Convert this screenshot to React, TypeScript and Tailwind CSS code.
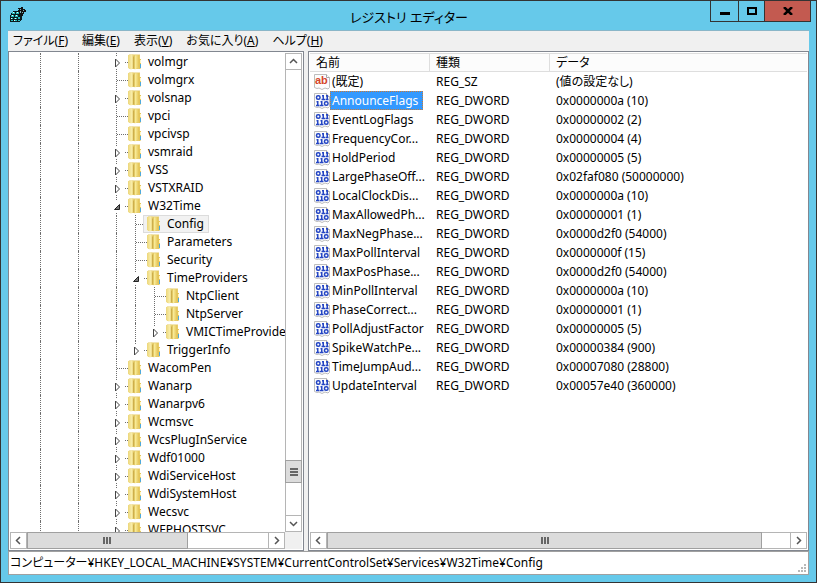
import React from 'react';
import clsx from 'clsx';

type NodeState = 'open' | 'closed' | 'leaf';

interface TreeNode {
  name: string;
  state: NodeState;
  depth: number;
  // vertical guides of the parents that still have siblings below
  guides: boolean[];
  last?: boolean;
  selected?: boolean;
}

const top = (name: string, state: NodeState): TreeNode => ({ name, state, depth: 0, guides: [] });

const tree: TreeNode[] = [
  top('volmgr', 'closed'),
  top('volmgrx', 'leaf'),
  top('volsnap', 'closed'),
  top('vpci', 'leaf'),
  top('vpcivsp', 'leaf'),
  top('vsmraid', 'closed'),
  top('VSS', 'closed'),
  top('VSTXRAID', 'closed'),
  top('W32Time', 'open'),
  { name: 'Config', state: 'leaf', depth: 1, guides: [true], selected: true },
  { name: 'Parameters', state: 'leaf', depth: 1, guides: [true] },
  { name: 'Security', state: 'leaf', depth: 1, guides: [true] },
  { name: 'TimeProviders', state: 'open', depth: 1, guides: [true] },
  { name: 'NtpClient', state: 'leaf', depth: 2, guides: [true, true] },
  { name: 'NtpServer', state: 'leaf', depth: 2, guides: [true, true] },
  { name: 'VMICTimeProvider', state: 'closed', depth: 2, guides: [true, true], last: true },
  { name: 'TriggerInfo', state: 'closed', depth: 1, guides: [true], last: true },
  top('WacomPen', 'leaf'),
  top('Wanarp', 'closed'),
  top('Wanarpv6', 'closed'),
  top('Wcmsvc', 'closed'),
  top('WcsPlugInService', 'closed'),
  top('Wdf01000', 'closed'),
  top('WdiServiceHost', 'closed'),
  top('WdiSystemHost', 'closed'),
  top('Wecsvc', 'closed'),
  top('WEPHOSTSVC', 'closed'),
];

const values = [
  { name: '(既定)', type: 'REG_SZ', data: '(値の設定なし)' },
  { name: 'AnnounceFlags', type: 'REG_DWORD', data: '0x0000000a (10)', selected: true },
  { name: 'EventLogFlags', type: 'REG_DWORD', data: '0x00000002 (2)' },
  { name: 'FrequencyCor...', type: 'REG_DWORD', data: '0x00000004 (4)' },
  { name: 'HoldPeriod', type: 'REG_DWORD', data: '0x00000005 (5)' },
  { name: 'LargePhaseOff...', type: 'REG_DWORD', data: '0x02faf080 (50000000)' },
  { name: 'LocalClockDis...', type: 'REG_DWORD', data: '0x0000000a (10)' },
  { name: 'MaxAllowedPh...', type: 'REG_DWORD', data: '0x00000001 (1)' },
  { name: 'MaxNegPhase...', type: 'REG_DWORD', data: '0x0000d2f0 (54000)' },
  { name: 'MaxPollInterval', type: 'REG_DWORD', data: '0x0000000f (15)' },
  { name: 'MaxPosPhase...', type: 'REG_DWORD', data: '0x0000d2f0 (54000)' },
  { name: 'MinPollInterval', type: 'REG_DWORD', data: '0x0000000a (10)' },
  { name: 'PhaseCorrect...', type: 'REG_DWORD', data: '0x00000001 (1)' },
  { name: 'PollAdjustFactor', type: 'REG_DWORD', data: '0x00000005 (5)' },
  { name: 'SpikeWatchPe...', type: 'REG_DWORD', data: '0x00000384 (900)' },
  { name: 'TimeJumpAud...', type: 'REG_DWORD', data: '0x00007080 (28800)' },
  { name: 'UpdateInterval', type: 'REG_DWORD', data: '0x00057e40 (360000)' },
];

const menus = [
  { label: 'ファイル', hotkey: 'F' },
  { label: '編集', hotkey: 'E' },
  { label: '表示', hotkey: 'V' },
  { label: 'お気に入り', hotkey: 'A' },
  { label: 'ヘルプ', hotkey: 'H' },
];

function AppIcon() {
  return (
    <svg width="16" height="16" viewBox="0 0 16 16" shapeRendering="crispEdges" aria-hidden="true">
      <path d="M3 4h7v1h2v8h-1v1h-1v1H0V8h1V6h1V5h1z" fill="#0a1a1c" />
      <path d="M2 5h3v2H2zM6 5h3v2H6zM1 8h3v2H1zM5 8h3v2H5zM1 11h2v1H1zM4 11h3v1H4zM8 10h2v2H8zM1 13h2v1H1zM4 13h3v1H4zM8 13h2v1H8z" fill="#26b9bc" />
      <path d="M3 5h1v1H3zM7 5h1v1H7zM2 8h1v1H2zM6 8h1v1H6zM1 11h1v1H1zM5 11h1v1H5zM4 13h1v1H4z" fill="#e4ffff" />
      <path d="M8 1h3V0h2v2h2v1h1v2h-2v2h-1v2h-2V7H9V5H8V3h1V2H8z" fill="#111" />
      <path d="M10 2h1v1h-1zM10 4h1v2h-1zM12 5h1v1h-1zM13 3h1v1h-1z" fill="#7fb0b4" />
    </svg>
  );
}

function FolderIcon() {
  return (
    <svg width="14" height="16" viewBox="0 0 14 16" className="shrink-0" aria-hidden="true">
      <defs>
        <linearGradient id="folderLeft" x1="0" x2="1">
          <stop offset="0" stopColor="#ecd67a" />
          <stop offset="0.6" stopColor="#f8eca8" />
          <stop offset="1" stopColor="#e2c864" />
        </linearGradient>
        <linearGradient id="folderRight" x1="0" x2="1">
          <stop offset="0" stopColor="#d8b94e" />
          <stop offset="0.3" stopColor="#f8ea96" />
          <stop offset="1" stopColor="#e4c353" />
        </linearGradient>
      </defs>
      <path d="M1 .5h11V5h1v9l-1 1H1z" fill="#e6cc6c" />
      <path d="M0 1l5-.5 1 1V14l-3 1.500L0 14z" fill="url(#folderLeft)" />
      <path d="M5 3l1-1v12l-1 1z" fill="#cdae4a" />
      <path d="M6 1.500L11 1v12l-4 2.500-1-1z" fill="url(#folderRight)" />
      <path d="M11 5h2v9l-2 1z" fill="#e4c458" />
      <path d="M12 6h1v3h-1z" fill="#fff6c4" />
      <path d="M12 10h1v4h-1z" fill="#4fa9dc" />
    </svg>
  );
}

function ValueIcon({ text }: { text: boolean }) {
  return (
    <svg width="16" height="16" viewBox="0 0 16 16" className="shrink-0" aria-hidden="true">
      <path d="M.5.500h12l3 3v10l-1.500 1.500-3-1-3 1.500-3-1.500-2 .5-2.500-1z" fill="#fcfcfc" stroke="#bdbdbd" />
      <path d="M12.500.5v3h3" fill="#fff" stroke="#a8a8a8" />
      {text ? (
        <text x="1" y="10" fill="#d5452a" className="font-['Liberation_Sans',sans-serif] text-[11px] font-bold">
          ab
        </text>
      ) : (
        <g fill="none" stroke="#2546c4" strokeWidth="1.500">
          <rect x="2.500" y="2.750" width="3.500" height="3.500" rx="1.500" />
          <path d="M8 2.750h1.250V6M7.500 6.500h3.500M12 2.750h1.250V6M11.500 6.500h3" />
          <path d="M2.500 8.750h1.250V12M2 12.500h3.500M6.500 8.750h1.250V12M6 12.500h3.500" />
          <rect x="10.500" y="8.750" width="3.500" height="3.500" rx="1.500" />
        </g>
      )}
    </svg>
  );
}

// the 16px cell left of a folder: dotted connector plus the expand arrow
function Connector({ state, last }: { state: NodeState; last?: boolean }) {
  return (
    <svg width="16" height="18" viewBox="0 0 16 18" className="shrink-0" aria-hidden="true">
      <g stroke="#6e6e6e" strokeDasharray="1 1" shapeRendering="crispEdges">
        <path d={last ? 'M4.500 0V10' : 'M4.500 0V18'} />
        <path d="M5 9.500H16" />
      </g>
      {state !== 'leaf' && <path d="M1 3h11v13H1z" fill="#fff" />}
      {state === 'closed' && <path d="M3.500 6v8l4-4z" fill="#fff" stroke="#444" />}
      {state === 'open' && <path d="M7.500 7.500v5h-5z" fill="#777" stroke="#222" />}
    </svg>
  );
}

function TreeRow({ node }: { node: TreeNode }) {
  return (
    <li className="flex h-[18px] items-center whitespace-nowrap">
      {[true, false, true, false, ...node.guides].map((line, i) => (
        <span key={i} className="h-full w-[19px] shrink-0 pl-1">
          {line && <span className="block h-full border-l border-dotted border-[#6e6e6e]" />}
        </span>
      ))}
      <Connector state={node.state} last={node.last} />
      <span
        className={clsx(
          '-ml-1 flex h-[18px] items-center gap-1 border pr-1 pl-[3px]',
          node.selected ? 'border-[#dcdcdc] bg-[#f2f2f2]' : 'border-transparent'
        )}
      >
        <FolderIcon />
        <span className="pl-[2px]">{node.name}</span>
      </span>
    </li>
  );
}

type Direction = 'up' | 'down' | 'left' | 'right';

const chevrons: Record<Direction, string> = {
  up: 'M1 6l3.500-3.500L8 6',
  down: 'M1 3l3.500 3.500L8 3',
  left: 'M6 1L2.500 4.500 6 8',
  right: 'M3 1l3.500 3.500L3 8',
};

function ScrollButton({ direction }: { direction: Direction }) {
  return (
    <button aria-label={direction} className="flex size-[17px] shrink-0 items-center justify-center border border-[#b5b5b5] bg-white">
      <svg width="9" height="9" viewBox="0 0 9 9" fill="none" stroke="#555" strokeWidth="1.500">
        <path d={chevrons[direction]} />
      </svg>
    </button>
  );
}

function HorizontalScroll({ thumb }: { thumb: string }) {
  return (
    <div className="flex h-[17px] min-w-0 border-y border-[#b5b5b5] bg-white">
      <div className="-my-px flex min-w-0 flex-1">
        <ScrollButton direction="left" />
        <div className="flex min-w-0 flex-1">
          <div className={clsx('flex items-center justify-center gap-px border border-[#a0a0a0] bg-[#dcdcdc]', thumb)}>
            <span className="h-[7px] w-[2px] bg-[#666]" />
            <span className="h-[7px] w-[2px] bg-[#666]" />
            <span className="h-[7px] w-[2px] bg-[#666]" />
          </div>
        </div>
        <ScrollButton direction="right" />
      </div>
    </div>
  );
}

function VerticalScroll() {
  return (
    <div className="flex min-h-0 flex-col border-x border-[#b5b5b5] bg-white">
      <div className="-mx-px flex flex-1 flex-col">
        <ScrollButton direction="up" />
        <div className="flex flex-1 flex-col justify-end pb-8">
          <div className="flex h-[23px] flex-col items-center justify-center gap-px border border-[#a0a0a0] bg-[#dcdcdc]">
            <span className="h-[2px] w-[8px] bg-[#666]" />
            <span className="h-[2px] w-[8px] bg-[#666]" />
            <span className="h-[2px] w-[8px] bg-[#666]" />
          </div>
        </div>
        <ScrollButton direction="down" />
      </div>
    </div>
  );
}

function TitleBar() {
  return (
    <header className="flex h-[29px] shrink-0 items-start">
      <div className="w-[107px] pt-[6px] pl-[9px]">
        <AppIcon />
      </div>
      <h1 className="flex-1 pt-[6px] text-center text-[13px] leading-5">レジストリ エディター</h1>
      <div className="mr-[5px] flex h-[21px] w-[101px] border border-t-0 border-[#333]">
        <button aria-label="最小化" className="flex w-[28px] items-center justify-center border-r border-[#333]">
          <span className="mt-1 h-[3px] w-[10px] bg-black" />
        </button>
        <button aria-label="最大化" className="flex w-[26px] items-center justify-center border-r border-[#333]">
          <span className="h-[8px] w-[10px] border-2 border-black" />
        </button>
        <button aria-label="閉じる" className="flex flex-1 items-center justify-center bg-[#c35a50]">
          <svg width="10" height="8" viewBox="0 0 10 8" stroke="#000" strokeWidth="2.500">
            <path d="M1 0l8 8M9 0L1 8" />
          </svg>
        </button>
      </div>
    </header>
  );
}

export default function App() {
  return (
    <div className="flex h-screen flex-col border border-[#333] bg-[#66c9ea] font-['Noto_Sans','Noto_Sans_CJK_JP',sans-serif] text-[12px] leading-[18px] text-black [font-feature-settings:'palt']">
      <TitleBar />
      <main className="mx-[7px] mb-[7px] flex min-h-0 flex-1 flex-col bg-[#f0f0f0]">
        <nav className="flex h-[21px] shrink-0 items-center gap-[14px] border-t border-[#8ab6c8] px-[5px]">
          {menus.map((m) => (
            <button key={m.hotkey} className="whitespace-nowrap">
              {m.label}(<u>{m.hotkey}</u>)
            </button>
          ))}
        </nav>

        <div className="flex min-h-0 flex-1 gap-1">
          <section className="grid w-[296px] shrink-0 grid-cols-[minmax(0,1fr)_17px] grid-rows-[minmax(0,1fr)_17px] border border-[#828790] bg-white p-px">
            <ul className="min-h-0 overflow-hidden pl-[26px]">
              {tree.map((node) => (
                <TreeRow key={node.name} node={node} />
              ))}
            </ul>
            <VerticalScroll />
            <HorizontalScroll thumb="w-2/3" />
            <div className="bg-[#f0f0f0]" />
          </section>

          <section className="flex min-w-0 flex-1 flex-col border border-[#828790] bg-white p-px">
            <div className="min-h-0 flex-1 overflow-hidden">
              <table className="w-full table-fixed border-separate border-spacing-0 text-left whitespace-nowrap">
                <thead>
                  <tr className="h-[19px] bg-[#fcfcfc] leading-[17px] *:border-y *:border-[#dedede] *:p-0 *:pl-[6px] *:font-normal">
                    <th className="w-[120px] border-r">名前</th>
                    <th className="w-[120px] border-r">種類</th>
                    <th>データ</th>
                  </tr>
                </thead>
                <tbody>
                  {values.map((v) => (
                    <tr key={v.name} className="h-[19px]">
                      <td className="p-0 pl-1">
                        <div className="flex h-[19px] items-center">
                          <ValueIcon text={v.type === 'REG_SZ'} />
                          <span
                            className={clsx(
                              'h-[19px] border border-dotted pr-1 pl-px',
                              v.selected ? 'border-[#cc7a33] bg-[#3399ff] text-white' : 'border-transparent'
                            )}
                          >
                            {v.name}
                          </span>
                        </div>
                      </td>
                      <td className="p-0 pl-[6px]">{v.type}</td>
                      <td className="p-0 pl-[6px]">{v.data}</td>
                    </tr>
                  ))}
                </tbody>
              </table>
            </div>
            <HorizontalScroll thumb="w-[94%]" />
          </section>
        </div>

        <footer className="flex h-6 shrink-0 items-center justify-between border border-[#a0a0a0] bg-white pl-px">
          <span className="whitespace-nowrap">
            コンピューター¥HKEY_LOCAL_MACHINE¥SYSTEM¥CurrentControlSet¥Services¥W32Time¥Config
          </span>
          <svg width="9" height="9" viewBox="0 0 9 9" fill="#b8b8b8" className="mr-px mb-px self-end" aria-hidden="true">
            <path d="M6 0h2v2H6zM3 3h2v2H3zM6 3h2v2H6zM0 6h2v2H0zM3 6h2v2H3zM6 6h2v2H6z" />
          </svg>
        </footer>
      </main>
    </div>
  );
}
